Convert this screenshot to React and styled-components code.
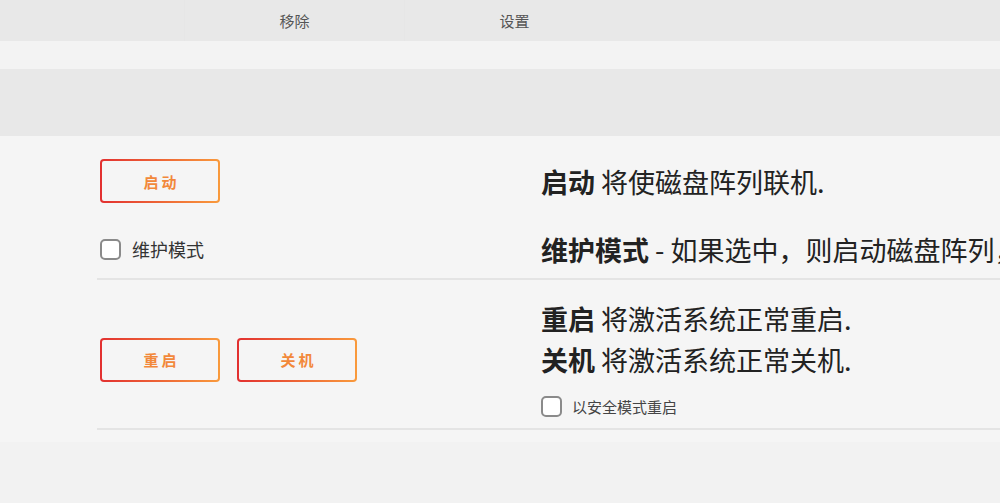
import React from "react";
import styled, { createGlobalStyle } from "styled-components";

const GlobalStyle = createGlobalStyle`
  html, body {
    margin: 0;
    padding: 0;
    background: #f2f2f2;
    overflow: hidden;
  }
  body {
    font-family: "Noto Sans CJK SC", "Noto Sans", sans-serif;
  }
`;

function App() {
  return (
    <Page>
      <GlobalStyle />
      <TabBar>
        <TabSpacer />
        <Tab>移除</Tab>
        <Tab>设置</Tab>
        <TabSpacer />
      </TabBar>
      <Strip />
      <Band />

      <Panel>
        <Section>
          <Cell>
            <ActionButton>启动</ActionButton>
          </Cell>
          <Text>
            <strong>启动</strong> 将使磁盘阵列联机.
          </Text>
          <Cell>
            <Check>
              <Box />
              <Label>维护模式</Label>
            </Check>
          </Cell>
          <Text>
            <strong>维护模式</strong> - 如果选中，则启动磁盘阵列，但不挂载磁盘。
          </Text>
        </Section>

        <Section $restart>
          <Cell>
            <Buttons>
              <ActionButton>重启</ActionButton>
              <ActionButton>关机</ActionButton>
            </Buttons>
          </Cell>
          <TextBlock>
            <Text>
              <strong>重启</strong> 将激活系统正常重启.
            </Text>
            <Text>
              <strong>关机</strong> 将激活系统正常关机.
            </Text>
            <Check $small>
              <Box />
              <Label $small>以安全模式重启</Label>
            </Check>
          </TextBlock>
        </Section>
      </Panel>
    </Page>
  );
}

export default App;

const Page = styled.div`
  width: 1000px;
  height: 503px;
  background: #f2f2f2;
  overflow: hidden;
`;

const TabBar = styled.div`
  height: 41px;
  background: #e8e8e8;
  display: flex;
`;

const TabSpacer = styled.div`
  width: 184px;
  flex: none;
  &:last-child {
    flex: 1;
  }
`;

const Tab = styled.div`
  width: 219px;
  display: flex;
  align-items: center;
  justify-content: center;
  font-size: 15px;
  color: #555;
  border-left: 1px solid #e6e6e6;
  &:last-of-type {
    border-right: 1px solid #e6e6e6;
  }
`;

const Strip = styled.div`
  height: 28px;
  background: #f3f3f3;
`;

const Band = styled.div`
  height: 67px;
  background: #e8e8e8;
`;

const Panel = styled.div`
  background: #f5f5f5;
  padding-bottom: 12px;
`;

const Section = styled.div`
  margin-left: 97px;
  display: grid;
  grid-template-columns: 444px 1fr;
  grid-auto-rows: ${(p) => (p.$restart ? "auto" : "44px")};
  row-gap: 24px;
  padding: ${(p) => (p.$restart ? "18px 0 7px" : "23px 0 7px")};
  border-bottom: 2px solid #e4e4e4;
  align-items: center;
`;

const Cell = styled.div`
  padding-left: 3px;
  display: flex;
  align-items: center;
`;

const Buttons = styled.div`
  display: flex;
  gap: 17px;
`;

const ActionButton = styled.button`
  width: 120px;
  height: 44px;
  box-sizing: border-box;
  border: 2px solid transparent;
  border-radius: 4px;
  background: linear-gradient(#f5f5f5, #f5f5f5) padding-box,
    linear-gradient(90deg, #e23030, #f99a3c) border-box;
  color: #f2883a;
  font-family: "Noto Sans CJK SC", "Noto Sans", sans-serif;
  font-size: 15px;
  font-weight: 600;
  letter-spacing: 3px;
  padding: 0 0 0 3px;
  cursor: pointer;
`;

const TextBlock = styled.div`
  display: flex;
  flex-direction: column;
`;

const Text = styled.div`
  font-size: 27px;
  line-height: 41px;
  color: #222;
  white-space: nowrap;
  strong {
    font-weight: 700;
  }
`;

const Check = styled.label`
  display: flex;
  align-items: center;
  gap: ${(p) => (p.$small ? "10px" : "11px")};
  height: ${(p) => (p.$small ? "30px" : "auto")};
  margin-top: ${(p) => (p.$small ? "11px" : "0")};
`;

const Box = styled.span`
  width: 21px;
  height: 21px;
  box-sizing: border-box;
  border: 2px solid #8a8a8a;
  border-radius: 5px;
  background: #fff;
  flex: none;
`;

const Label = styled.span`
  font-size: ${(p) => (p.$small ? "15px" : "18px")};
  color: ${(p) => (p.$small ? "#444" : "#333")};
`;
